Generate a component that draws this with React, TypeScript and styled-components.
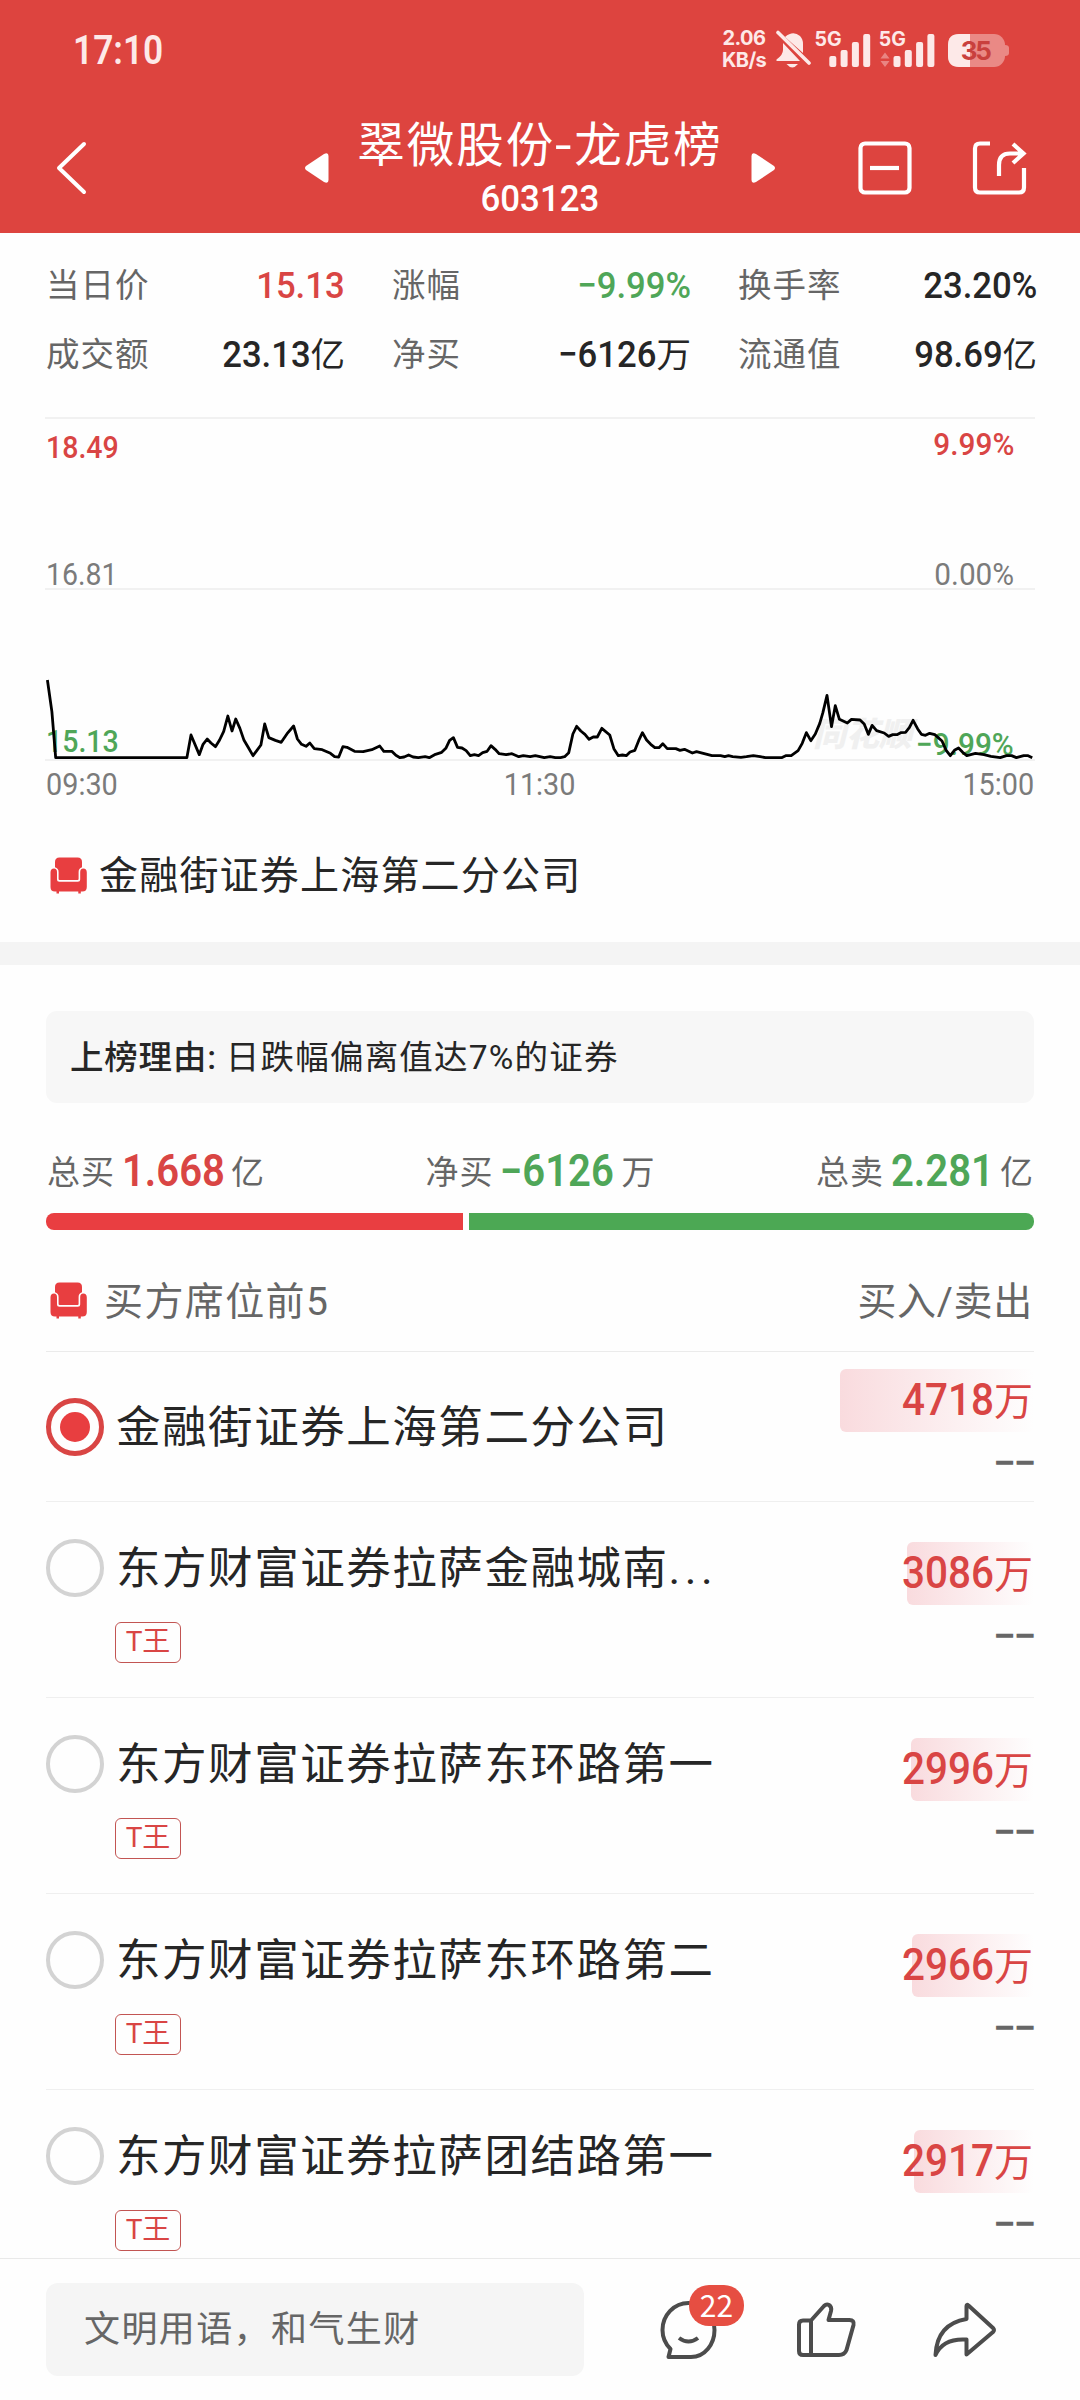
import React from 'react';
import styled, { createGlobalStyle } from 'styled-components';

const RED = '#d94544';
const GREEN = '#4fa658';
const INK = '#262626';
const GREY = '#666666';

const GlobalStyle = createGlobalStyle`
  * { box-sizing: border-box; }
  body { margin: 0; background: #fefefe; }
`;

const Screen = styled.div`
  width: 1080px;
  height: 2400px;
  overflow: hidden;
  display: flex;
  flex-direction: column;
  background: #fefefe;
  color: ${INK};
  font-family: Roboto, 'Noto Sans CJK SC', sans-serif;
  white-space: nowrap;
`;

/* Condensed figures: squeezed towards the side they are aligned to. */
const Num = styled.span<{ $x: number; $from?: 'left' | 'center' | 'right' }>`
  display: inline-block;
  transform: scaleX(${(p) => p.$x});
  transform-origin: ${(p) => p.$from ?? 'right'} center;
`;

/* ---------- header ---------- */
const Header = styled.header`
  flex: none;
  height: 233px;
  background: #dd443f;
  color: #fff;
`;

const StatusBar = styled.div`
  height: 100px;
  padding: 0 71px 0 73px;
  display: flex;
  justify-content: space-between;
  align-items: center;
  color: #fde9e8;
`;

const Clock = styled.div`
  font: 600 41px/40px Roboto, sans-serif;
`;

const StatusIcons = styled.div`
  display: flex;
  align-items: center;
  height: 40px;
`;

const Speed = styled.div`
  width: 44px;
  margin: -3px 10px 0 0;
  font: 700 20px/22px Inter, sans-serif;
  text-align: center;
  letter-spacing: -0.6px;
`;

const NavBar = styled.div`
  height: 133px;
  display: flex;
  align-items: center;
  padding: 2px 51px 0 54px;
`;

const NavSide = styled.div<{ $width: number }>`
  flex: none;
  width: ${(p) => p.$width}px;
  display: flex;
  justify-content: space-between;
  align-items: center;
`;

const NavIcons = styled.div`
  display: flex;
  gap: 60px;
  margin-right: 1px;
`;

const Glyph = styled.svg`
  flex: none;
  display: block;
`;

const NavTitle = styled.div`
  flex: 1;
  text-align: center;
`;

const StockName = styled.div`
  font-size: 47.5px;
  line-height: 60px;
  letter-spacing: 2px;
  margin-top: -2px;
`;

const Hyphen = styled.span`
  display: inline-block;
  transform: scaleX(1.25);
  margin: 0 2px;
`;

const StockCode = styled.div`
  font-size: 37.5px;
  line-height: 40px;
  font-weight: 500;
  margin-top: 2px;
`;

/* ---------- quote stats ---------- */
const Stats = styled.section`
  flex: none;
  display: grid;
  grid-template-columns: 298px 298px 298px;
  column-gap: 48px;
  grid-template-rows: 68px 70px;
  padding: 18px 0 0 46px;
  height: 184px;
`;

const Stat = styled.div`
  display: flex;
  justify-content: space-between;
  align-items: center;
`;

const StatLabel = styled.span`
  color: ${GREY};
  font-size: 33.5px;
  line-height: 48px;
  letter-spacing: 1px;
  padding-top: 2px;
`;

const StatValue = styled.span<{ $color?: string }>`
  color: ${(p) => p.$color ?? INK};
  font-size: 37.5px;
  line-height: 48px;
  font-weight: 500;
  margin-right: -1px;
`;

const Unit = styled.span<{ $size: number }>`
  font-size: ${(p) => p.$size}px;
  font-weight: 400;
`;

/* ---------- chart ---------- */
const Chart = styled.section`
  flex: none;
  position: relative;
  margin: 0 45px;
  height: 344px;
  border-top: 2px solid #f1f1f1;
  border-bottom: 2px solid #f1f1f1;
`;

const MidLine = styled.div`
  position: absolute;
  left: 0;
  right: 0;
  top: 169px;
  height: 2px;
  background: #f1f1f1;
`;

const AxisLabel = styled.span<{ $top: number; $right?: boolean; $color?: string }>`
  position: absolute;
  top: ${(p) => p.$top - 15}px;
  ${(p) => (p.$right ? 'right: 21px;' : 'left: 1px;')}
  transform: scaleX(${(p) => (p.$right ? 0.96 : 0.92)});
  transform-origin: ${(p) => (p.$right ? 'right' : 'left')} center;
  color: ${(p) => p.$color ?? '#7b7b7b'};
  font-size: 31px;
  font-weight: ${(p) => (p.$color ? 500 : 400)};
  line-height: 32px;
`;

const Watermark = styled.span`
  position: absolute;
  left: 768px;
  top: 293px;
  font: italic 900 33px/40px 'Noto Sans CJK SC', sans-serif;
  color: #f0f0f0;
`;

const Line = styled.svg`
  position: absolute;
  left: 0;
  top: 221px;
  width: 990px;
  height: 124px;
  overflow: visible;
`;

const TimeAxis = styled.div`
  flex: none;
  display: flex;
  justify-content: space-between;
  padding: 8px 46px 0;
  height: 79px;
  color: #7b7b7b;
  font-size: 31px;
  line-height: 32px;
`;

const BranchRow = styled.div`
  flex: none;
  height: 101px;
  padding: 17px 0 0 50px;
  display: flex;
  align-items: flex-start;
  gap: 12px;
`;

const BranchName = styled.span`
  font-size: 39px;
  line-height: 40px;
  letter-spacing: 1.2px;
  margin-top: -1px;
`;

const Band = styled.div`
  flex: none;
  height: 23px;
  margin-top: 1px;
  background: #f4f4f4;
`;

/* ---------- reason & totals ---------- */
const Reason = styled.div`
  flex: none;
  margin: 46px 46px 0;
  height: 92px;
  border-radius: 11px;
  background: #f7f7f7;
  padding: 0 0 5px 24px;
  display: flex;
  align-items: center;
  gap: 9px;
  font-size: 33.5px;
  letter-spacing: 1.2px;
`;

const ReasonLabel = styled.span`
  font-weight: 500;
  letter-spacing: 0.8px;
`;

const Totals = styled.div`
  flex: none;
  display: flex;
  justify-content: space-between;
  padding: 0 46px 0 47px;
  margin-top: 43px;
  height: 67px;
`;

const Total = styled.div`
  display: flex;
  align-items: center;
  height: 48px;
  color: ${GREY};
  font-size: 33px;
  letter-spacing: 1px;
`;

const TotalValue = styled.span<{ $color: string }>`
  color: ${(p) => p.$color};
  font-size: 44px;
  font-weight: 600;
  letter-spacing: 0;
  transform: scaleX(0.91);
  transform-origin: left center;
  margin: 1px -4px 0 7px;
`;

const Split = styled.div`
  flex: none;
  display: flex;
  gap: 6px;
  margin: 0 46px;
  height: 17px;
  border-radius: 8px;
  overflow: hidden;
`;

const SplitPart = styled.div<{ $grow: number; $color: string }>`
  flex: ${(p) => p.$grow} 1 0;
  background: ${(p) => p.$color};
`;

/* ---------- seat list ---------- */
const SeatHead = styled.div`
  flex: none;
  height: 122px;
  margin: 0 46px;
  padding: 19px 1px 0 4px;
  border-bottom: 1px solid #ebebeb;
  display: flex;
  align-items: center;
  color: ${GREY};
  font-size: 39px;
`;

const SeatHeadTitle = styled.span`
  flex: 1;
  margin: -5px 0 0 17px;
  letter-spacing: 1.4px;
`;

const SeatHeadSides = styled.span`
  margin-top: -5px;
  letter-spacing: 0.7px;
`;

const Seats = styled.div`
  flex: 1;
  min-height: 0;
  overflow: hidden;
  padding: 0 46px;
`;

const Seat = styled.div<{ $tall?: boolean }>`
  height: ${(p) => (p.$tall ? 196 : 150)}px;
  border-bottom: 1px solid #efefef;
  display: flex;
  align-items: center;
`;

const SeatMain = styled.div<{ $tall?: boolean }>`
  flex: 1;
  padding-top: ${(p) => (p.$tall ? 2 : 0)}px;
  display: grid;
  grid-template-columns: 58px auto;
  column-gap: 12px;
  row-gap: 25px;
  justify-content: start;
  align-items: center;
`;

const Radio = styled.span<{ $on?: boolean }>`
  width: 58px;
  height: 58px;
  border-radius: 50%;
  border: ${(p) => (p.$on ? `5px solid ${RED}` : '4px solid #d3d3d3')};
  display: flex;
  align-items: center;
  justify-content: center;
  &::after {
    content: '';
    width: 30px;
    height: 30px;
    border-radius: 50%;
    background: ${(p) => (p.$on ? '#e83e40' : 'transparent')};
  }
`;

const SeatName = styled.span`
  font-size: 44.5px;
  line-height: 56px;
  letter-spacing: 1.55px;
  padding-top: 2px;
`;

const Dots = styled.span`
  letter-spacing: 4.5px;
`;

const Tag = styled.span`
  grid-column: 2;
  justify-self: start;
  margin-left: -1px;
  width: 66px;
  height: 41px;
  border: 1px solid #c25553;
  border-radius: 6px;
  color: ${RED};
  font-size: 28px;
  line-height: 37px;
  text-align: center;
`;

const SeatSide = styled.div`
  width: 194px;
  height: 116px;
  display: flex;
  flex-direction: column;
  align-items: flex-end;
`;

const AmountBar = styled.div<{ $width: number }>`
  flex: none;
  width: ${(p) => p.$width}px;
  height: 63px;
  border-radius: 6px;
  background: linear-gradient(90deg, #f9dbde, #fefefe);
  display: flex;
  justify-content: flex-end;
  align-items: center;
  padding: 0 1px 0 0;
  color: ${RED};
  font-size: 43.5px;
  font-weight: 500;
`;

const AmountFigure = styled(Num)`
  margin-top: 1px;
`;

const AmountUnit = styled(Unit)`
  margin-top: -5px;
`;

const Blank = styled.div`
  flex: none;
  font-size: 41px;
  font-weight: 500;
  height: 53px;
  line-height: 63px;
  letter-spacing: -2.5px;
  color: ${GREY};
`;

/* ---------- footer ---------- */
const Footer = styled.footer`
  flex: none;
  height: 142px;
  border-top: 1px solid #e9e9e9;
  background: #fefefe;
  padding: 24px 87px 0 46px;
  display: flex;
  align-items: flex-start;
`;

const Input = styled.div`
  width: 538px;
  height: 93px;
  border-radius: 12px;
  background: #f5f5f5;
  color: ${GREY};
  padding-left: 38px;
  line-height: 94px;
  font-size: 36px;
  letter-spacing: 1.4px;
`;

const Actions = styled.div`
  flex: 1;
  height: 93px;
  margin-left: 76px;
  display: flex;
  justify-content: space-between;
  align-items: center;
`;

const Action = styled.div`
  position: relative;
  width: 60px;
  height: 60px;
`;

const Badge = styled.span`
  position: absolute;
  left: 29px;
  top: -15px;
  width: 55px;
  height: 41px;
  border-radius: 20px;
  background: #e64e42;
  color: #fff;
  font: 400 30px/38px 'Noto Sans CJK SC', sans-serif;
  text-align: center;
`;

const Sofa = () => (
  <Glyph width="37" height="37" viewBox="0 0 37 37" fill="#e83e40">
    <path d="M9.5 0.5H27.5Q32 0.5 32 5V10.2Q28.6 11.2 28.6 15V22Q28.6 23 27.6 23H9.6Q8.6 23 8.6 22V15Q8.6 11.200 5 10.200V5Q5 .5 9.500 .5Z" />
    <path d="M4 11.500Q7 11.500 7 15V22.200Q7 24.700 9.500 24.700H27.700Q30.200 24.700 30.200 22.200V15Q30.200 11.500 33.200 11.500Q36.800 11.500 36.800 15.500V30Q36.800 34.500 32.300 34.500H30.800V36.500H28.300V34.500H9V36.500H6.500V34.500H5Q.5 34.500 .5 30V15.500Q.5 11.500 4 11.500Z" />
  </Glyph>
);

const Bars = ({ x }: { x: number }) => (
  <g>
    {[11, 17, 25, 33].map((h, i) => (
      <rect key={i} x={x + i * 11.3} y={37 - h} width="7" height={h} rx="2" />
    ))}
  </g>
);

const Signals = () => (
  <Glyph width="233" height="50" viewBox="776 -5 233 50" fill="#fde9e8">
    <path d="M785 7Q793 0 800 6Q803 9 803 14V23ZM783 13V20Q783 25 776.500 29.500V31H800Z" />
    <path d="M786.500 34H798Q795 37.500 792.300 37.500Q789.500 37.500 786.500 34Z" />
    <path d="M778 2.500L809 33" stroke="#fde9e8" strokeWidth="3.600" strokeLinecap="round" />
    <text x="814.500" y="16" fontFamily="Inter, sans-serif" fontWeight="700" fontSize="19.500">5G</text>
    <Bars x={829.3} />
    <text x="878.700" y="16" fontFamily="Inter, sans-serif" fontWeight="700" fontSize="19.500">5G</text>
    <path d="M880.500 28.500L885 22.500L889.500 28.500ZM880.500 31L885 37L889.500 31Z" opacity=".4" />
    <Bars x={893.5} />
    <rect x="948" y="4" width="57" height="33" rx="11" opacity=".42" />
    <path d="M1005 15Q1009 15 1009 18V23Q1009 26 1005 26Z" opacity=".42" />
    <path d="M959 4H970V37H959Q948 37 948 26V15Q948 4 959 4Z" />
    <text x="976.300" y="30" fontFamily="Inter, sans-serif" fontWeight="700" fontSize="26" textAnchor="middle" textLength="31" fill="#c9403d">35</text>
  </Glyph>
);

const linePoints =
  '138,120 151,215 162,353 543,353 555,285 579,344 590,313 602,297 613,309 626,320 638,300 650,274 662,228 674,273 685,237 697,265 709,301 721,322 735,347 746,332 758,315 769,252 781,293 800,301 817,307 834,281 853,258 864,297 876,313 889,319 900,309 913,326 936,329 960,340 972,350 984,351 996,320 1008,322 1030,334 1055,335 1080,329 1103,318 1115,334 1138,334 1150,346 1162,353 1174,351 1187,345 1200,351 1215,353 1235,350 1247,353 1265,343 1283,337 1295,325 1306,301 1317,293 1329,322 1342,324 1354,332 1366,347 1378,344 1390,347 1402,338 1415,334 1426,317 1438,328 1450,341 1470,344 1487,341 1507,350 1520,347 1540,350 1555,347 1568,350 1581,353 1598,350 1613,353 1628,353 1640,350 1652,338 1664,282 1675,259 1687,273 1699,283 1711,298 1723,291 1735,291 1748,265 1771,285 1783,326 1796,347 1808,345 1819,347 1830,336 1844,331 1855,302 1866,278 1878,300 1890,313 1902,323 1914,323 1925,311 1938,326 1963,326 1975,331 1988,328 2011,339 2023,335 2068,347 2093,347 2105,350 2116,347 2128,350 2152,352 2168,350 2188,347 2208,350 2223,353 2270,353 2282,347 2298,347 2318,332 2330,310 2342,278 2355,302 2368,282 2381,250 2390,218 2402,166 2415,260 2426,197 2438,238 2461,249 2473,238 2498,240 2510,252 2522,283 2533,256 2546,272 2568,279 2581,289 2593,284 2605,284 2616,278 2630,277 2641,263 2652,241 2665,266 2676,283 2688,286 2700,280 2715,284 2736,303 2748,331 2760,347 2772,331 2784,324 2796,337 2808,347 2833,340 2858,344 2878,349 2905,353 2923,347 2938,347 2952,353 2973,347 2986,347 2998,353';

interface StatItem {
  label: string;
  value: string;
  unit?: string;
  color?: string;
}

const stats: StatItem[] = [
  { label: '当日价', value: '15.13', color: RED },
  { label: '涨幅', value: '−9.99%', color: GREEN },
  { label: '换手率', value: '23.20%' },
  { label: '成交额', value: '23.13', unit: '亿' },
  { label: '净买', value: '−6126', unit: '万' },
  { label: '流通值', value: '98.69', unit: '亿' },
];

interface SeatItem {
  name: string;
  amount: string;
  bar: number;
  on?: boolean;
  cut?: boolean;
  tag?: string;
}

const seats: SeatItem[] = [
  { name: '金融街证券上海第二分公司', amount: '4718', bar: 194, on: true },
  { name: '东方财富证券拉萨金融城南', amount: '3086', bar: 127, cut: true, tag: 'T王' },
  { name: '东方财富证券拉萨东环路第一', amount: '2996', bar: 123, tag: 'T王' },
  { name: '东方财富证券拉萨东环路第二', amount: '2966', bar: 122, tag: 'T王' },
  { name: '东方财富证券拉萨团结路第一', amount: '2917', bar: 120, tag: 'T王' },
];

export default function App() {
  return (
    <Screen>
      <GlobalStyle />
      <Header>
        <StatusBar>
          <Clock><Num $x={0.86} $from="left">17:10</Num></Clock>
          <StatusIcons>
            <Speed>
              <div>2.06</div>
              <div>KB/s</div>
            </Speed>
            <Signals />
          </StatusIcons>
        </StatusBar>
        <NavBar>
          <NavSide $width={275}>
            <Glyph width="34" height="54" viewBox="0 0 34 54" fill="none" stroke="#fff" strokeWidth="4" strokeLinecap="round" strokeLinejoin="round">
              <path d="M30 3L5 27L30 51" />
            </Glyph>
            <Glyph width="24" height="30" viewBox="0 0 24 30" fill="#fff">
              <path d="M1 13Q-1 15 1 17L19 29Q23.500 31 23.500 27V3Q23.500 -1 19 1Z" />
            </Glyph>
          </NavSide>
          <NavTitle>
            <StockName>翠微股份<Hyphen>-</Hyphen>龙虎榜</StockName>
            <StockCode><Num $x={0.93} $from="center">603123</Num></StockCode>
          </NavTitle>
          <NavSide $width={278}>
            <Glyph width="24" height="30" viewBox="0 0 24 30" fill="#fff">
              <path d="M23 13Q25 15 23 17L5 29Q.5 31 .5 27V3Q.5 -1 5 1Z" />
            </Glyph>
            <NavIcons>
              <Glyph width="54" height="54" viewBox="0 0 54 54" fill="none" stroke="#fff" strokeWidth="4.200">
                <rect x="2.500" y="2.500" width="49" height="49" rx="4.500" />
                <path d="M12 27H41" />
              </Glyph>
              <Glyph width="56" height="54" viewBox="0 0 56 54" fill="none" stroke="#fff" strokeWidth="4.200">
                <path d="M18 2.500H8Q3 2.500 3 7.500V46.500Q3 51.500 8 51.500H47Q52 51.500 52 46.500V27" />
                <path d="M27 35V24Q27 12.500 38 12.500H51M41 3L51.500 12.500L41 22" />
              </Glyph>
            </NavIcons>
          </NavSide>
        </NavBar>
      </Header>

      <Stats>
        {stats.map((s) => (
          <Stat key={s.label}>
            <StatLabel>{s.label}</StatLabel>
            <StatValue $color={s.color}>
              <Num $x={0.925}>{s.value}</Num>
              {s.unit && <Unit $size={34.5}>{s.unit}</Unit>}
            </StatValue>
          </Stat>
        ))}
      </Stats>

      <Chart>
        <MidLine />
        <Watermark>同花顺</Watermark>
        <AxisLabel $top={28} $color={RED}>18.49</AxisLabel>
        <AxisLabel $top={25} $color={RED} $right>9.99%</AxisLabel>
        <AxisLabel $top={155}>16.81</AxisLabel>
        <AxisLabel $top={155} $right>0.00%</AxisLabel>
        <AxisLabel $top={322} $color={GREEN}>15.13</AxisLabel>
        <AxisLabel $top={325} $color={GREEN} $right>−9.99%</AxisLabel>
        <Line viewBox="131 0 2875 372" preserveAspectRatio="none">
          <polyline points={linePoints} fill="none" stroke="#000" strokeWidth="2.800" vectorEffect="non-scaling-stroke" strokeLinejoin="round" />
        </Line>
      </Chart>
      <TimeAxis>
        <Num $x={0.93} $from="left">09:30</Num>
        <Num $x={0.93} $from="center">11:30</Num>
        <Num $x={0.93} $from="right">15:00</Num>
      </TimeAxis>

      <BranchRow>
        <Sofa />
        <BranchName>金融街证券上海第二分公司</BranchName>
      </BranchRow>

      <Band />

      <Reason>
        <ReasonLabel>上榜理由:</ReasonLabel>
        <span>日跌幅偏离值达7%的证券</span>
      </Reason>

      <Totals>
        <Total>总买<TotalValue $color={RED}>1.668</TotalValue>亿</Total>
        <Total>净买<TotalValue $color={GREEN}>−6126</TotalValue>万</Total>
        <Total>总卖<TotalValue $color={GREEN}>2.281</TotalValue>亿</Total>
      </Totals>
      <Split>
        <SplitPart $grow={417} $color="#e93e41" />
        <SplitPart $grow={565} $color="#4ca854" />
      </Split>

      <SeatHead>
        <Sofa />
        <SeatHeadTitle>买方席位前5</SeatHeadTitle>
        <SeatHeadSides>买入/卖出</SeatHeadSides>
      </SeatHead>

      <Seats>
        {seats.map((s) => (
          <Seat key={s.name} $tall={!!s.tag}>
            <SeatMain $tall={!!s.tag}>
              <Radio $on={s.on} />
              <SeatName>
                {s.name}
                {s.cut && <Dots>...</Dots>}
              </SeatName>
              {s.tag && <Tag>{s.tag}</Tag>}
            </SeatMain>
            <SeatSide>
              <AmountBar $width={s.bar}>
                <AmountFigure $x={0.93}>{s.amount}</AmountFigure>
                <AmountUnit $size={39}>万</AmountUnit>
              </AmountBar>
              <Blank>−−</Blank>
            </SeatSide>
          </Seat>
        ))}
      </Seats>

      <Footer>
        <Input>文明用语，和气生财</Input>
        <Actions>
          <Action>
            <Glyph width="60" height="60" viewBox="0 0 60 60" fill="none" stroke="#4c4c4c" strokeWidth="4" strokeLinejoin="round">
              <path d="M8.500 57L10.500 49Q2.500 41 2.500 30A26 27 0 0 1 54.500 30C54.500 44 45 57 31 57Z" />
              <path d="M19 38Q28.500 45 38 38" />
            </Glyph>
            <Badge>22</Badge>
          </Action>
          <Action>
            <Glyph width="60" height="60" viewBox="0 0 60 60" fill="none" stroke="#4c4c4c" strokeWidth="4" strokeLinejoin="round">
              <path d="M14 20.500H6Q2 20.500 2 24.500V51Q2 55 6 55H42Q47.500 55 49.500 50L56.500 25Q57.500 20 52.500 20H31.500L34 11Q35 7 32 5Q29.500 3.500 27 6L14 20.500V55" />
            </Glyph>
          </Action>
          <Action>
            <Glyph width="64" height="60" viewBox="0 0 64 60" fill="none" stroke="#4c4c4c" strokeWidth="4" strokeLinejoin="round">
              <path d="M33.500 6V19Q4 24 2.500 55Q10 38 33.500 39.500V54.500L60 32Q62 30 60 28L35.500 5.500Q33.500 4 33.500 6Z" />
            </Glyph>
          </Action>
        </Actions>
      </Footer>
    </Screen>
  );
}
